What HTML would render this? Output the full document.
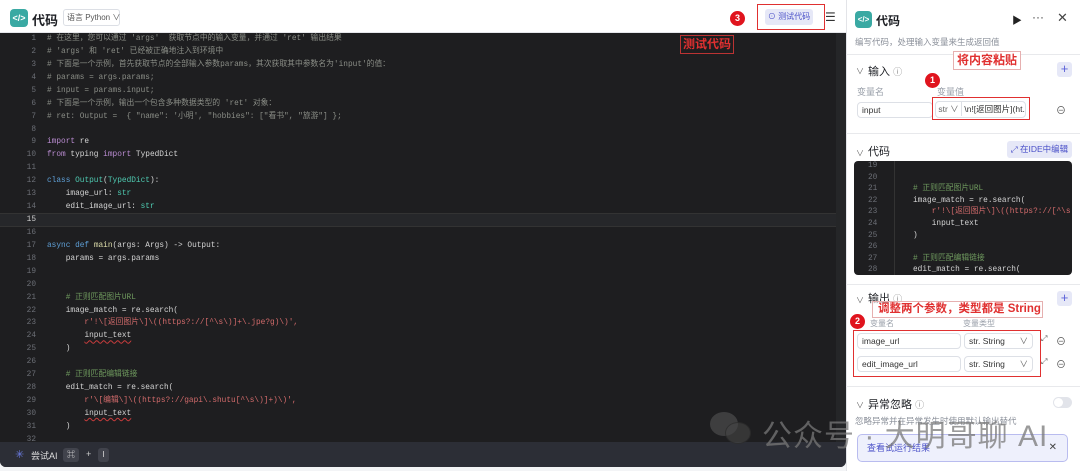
<!DOCTYPE html>
<html><head><meta charset="utf-8"><style>
*{margin:0;padding:0;box-sizing:border-box}
body{width:1080px;height:471px;overflow:hidden;background:#f3f4f6;font-family:"Liberation Sans","Noto Sans CJK SC",sans-serif;position:relative}
.a{position:absolute}
.code{font-family:"Liberation Mono","Noto Sans CJK SC",monospace;font-size:7.8px;white-space:pre;color:#d4d4d4}
.ln{position:absolute;left:0;width:36px;text-align:right;color:#6b6e75;font-size:7.8px;font-family:"Liberation Mono",monospace;height:12.93px;line-height:12.93px}
.cl{position:absolute;left:47px;height:12.93px;line-height:12.93px}
.cm{color:#8a8d86}.cg{color:#6f9a5e}.kw{color:#b98bd0}.bl{color:#5e9fd6}.ty{color:#4ec9b0}.st{color:#d36b6b}.fn{color:#dcdcaa}
.sq{text-decoration:underline wavy #c83c3c;text-underline-offset:2px}
.lbl{font-size:9px;color:#9aa0aa}
.box{border:1px solid #dde0e6;border-radius:4px;background:#fff;font-size:8.5px;color:#333;padding-left:4px;line-height:14px}
.red{border:1.5px solid #e03030}
.badge{width:15px;height:15px;border-radius:50%;background:#e0141e;color:#fff;font-size:9px;font-weight:bold;text-align:center;line-height:15px}
.sec{font-size:11px;color:#1d1f24}
.chev{font-size:8px;color:#666}
.plus{width:15px;height:15px;border-radius:3px;background:#e6e8f7;color:#5c62d8;font-size:13px;line-height:14px;text-align:center}
.div{height:1px;background:#e8e9ec;left:846px;width:234px}
</style></head><body>
<!-- left panel -->
<div class="a" style="left:0;top:0;width:846px;height:467px;background:#1e1e20;border-radius:0 0 6px 6px"></div>
<div class="a" style="left:0;top:0;width:846px;height:33px;background:#fff;border-bottom:1px solid #e5e6ea"></div>
<div class="a" style="left:10px;top:9px;width:18px;height:18px;border-radius:4px;background:#3aa9a3;color:#fff;font-size:9px;font-weight:bold;text-align:center;line-height:18px">&lt;/&gt;</div>
<div class="a" style="left:32px;top:10px;font-size:13px;font-weight:bold;color:#1d1f24">代码</div>
<div class="a" style="left:63px;top:9px;width:57px;height:17px;border:1px solid #dcdfe5;border-radius:3px;font-size:8px;color:#555;line-height:15px;padding-left:3px;white-space:nowrap">语言 Python ∨</div>
<div class="a badge" style="left:730px;top:11px">3</div>
<div class="a" style="left:757px;top:4px;width:68px;height:26px;border:1.5px solid #e03030"></div>
<div class="a" style="left:765px;top:9px;width:48px;height:16px;background:#e6e8f7;border-radius:3px;color:#4a50c8;font-size:8px;line-height:16px;text-align:center;white-space:nowrap">⊙ 测试代码</div>
<div class="a" style="left:825px;top:10px;font-size:12px;color:#333">☰</div>
<div class="a" style="left:680px;top:35px;width:54px;height:19px;border:1px solid #b33;color:#e03030;font-size:12px;font-weight:bold;line-height:17px;text-align:center;background:#1e1e20">测试代码</div>
<div class="a" style="left:0;top:213px;width:836px;height:14px;background:#26272a;border-top:1px solid #333;border-bottom:1px solid #333"></div>
<div class="a" style="left:836px;top:33px;width:10px;height:409px;background:#252628"></div>
<div class="a code" style="left:0;top:33px;width:836px;height:409px;overflow:hidden">
<div class="ln" style="top:0">1</div><div class="cl cm" style="top:0"># 在这里，您可以通过 'args'  获取节点中的输入变量，并通过 'ret' 输出结果</div>
<div class="ln" style="top:12.93px">2</div><div class="cl cm" style="top:12.93px"># 'args' 和 'ret' 已经被正确地注入到环境中</div>
<div class="ln" style="top:25.86px">3</div><div class="cl cm" style="top:25.86px"># 下面是一个示例，首先获取节点的全部输入参数params，其次获取其中参数名为'input'的值：</div>
<div class="ln" style="top:38.79px">4</div><div class="cl cm" style="top:38.79px"># params = args.params;</div>
<div class="ln" style="top:51.72px">5</div><div class="cl cm" style="top:51.72px"># input = params.input;</div>
<div class="ln" style="top:64.65px">6</div><div class="cl cm" style="top:64.65px"># 下面是一个示例，输出一个包含多种数据类型的 'ret' 对象：</div>
<div class="ln" style="top:77.58px">7</div><div class="cl cm" style="top:77.58px"># ret: Output =  { "name": '小明', "hobbies": ["看书", "旅游"] };</div>
<div class="ln" style="top:90.51px">8</div>
<div class="ln" style="top:103.44px">9</div><div class="cl" style="top:103.44px"><span class="kw">import</span> re</div>
<div class="ln" style="top:116.37px">10</div><div class="cl" style="top:116.37px"><span class="kw">from</span> typing <span class="kw">import</span> TypedDict</div>
<div class="ln" style="top:129.3px">11</div>
<div class="ln" style="top:142.23px">12</div><div class="cl" style="top:142.23px"><span class="bl">class</span> <span class="ty">Output</span>(<span class="ty">TypedDict</span>):</div>
<div class="ln" style="top:155.16px">13</div><div class="cl" style="top:155.16px">    image_url: <span class="ty">str</span></div>
<div class="ln" style="top:168.09px">14</div><div class="cl" style="top:168.09px">    edit_image_url: <span class="ty">str</span></div>
<div class="ln" style="top:181.02px;color:#ccc">15</div>
<div class="ln" style="top:193.95px">16</div>
<div class="ln" style="top:206.88px">17</div><div class="cl" style="top:206.88px"><span class="bl">async def</span> <span class="fn">main</span>(args: Args) -&gt; Output:</div>
<div class="ln" style="top:219.81px">18</div><div class="cl" style="top:219.81px">    params = args.params</div>
<div class="ln" style="top:232.74px">19</div>
<div class="ln" style="top:245.67px">20</div>
<div class="ln" style="top:258.6px">21</div><div class="cl cg" style="top:258.6px">    # 正则匹配图片URL</div>
<div class="ln" style="top:271.53px">22</div><div class="cl" style="top:271.53px">    image_match = re.search(</div>
<div class="ln" style="top:284.46px">23</div><div class="cl st" style="top:284.46px">        r'!\[返回图片\]\((https?://[^\s\)]+\.jpe?g)\)',</div>
<div class="ln" style="top:297.39px">24</div><div class="cl" style="top:297.39px">        <span class="sq">input_text</span></div>
<div class="ln" style="top:310.32px">25</div><div class="cl" style="top:310.32px">    )</div>
<div class="ln" style="top:323.25px">26</div>
<div class="ln" style="top:336.18px">27</div><div class="cl cg" style="top:336.18px">    # 正则匹配编辑链接</div>
<div class="ln" style="top:349.11px">28</div><div class="cl" style="top:349.11px">    edit_match = re.search(</div>
<div class="ln" style="top:362.04px">29</div><div class="cl st" style="top:362.04px">        r'\[编辑\]\((https?://gapi\.shutu[^\s\)]+)\)',</div>
<div class="ln" style="top:374.97px">30</div><div class="cl" style="top:374.97px">        <span class="sq">input_text</span></div>
<div class="ln" style="top:387.9px">31</div><div class="cl" style="top:387.9px">    )</div>
<div class="ln" style="top:400.83px">32</div>
</div>
<div class="a" style="left:0;top:442px;width:846px;height:25px;background:#2c2e36;border-radius:0 0 6px 6px"></div>
<div class="a" style="left:15px;top:448px;font-size:11px;color:#6a7be0">✳</div>
<div class="a" style="left:31px;top:449px;font-size:9px;color:#ddd">尝试AI</div>
<div class="a" style="left:63px;top:448px;width:16px;height:14px;background:#41434c;border-radius:3px;font-size:8px;color:#ddd;text-align:center;line-height:14px">⌘</div>
<div class="a" style="left:86px;top:449px;font-size:9px;color:#ccc">+</div>
<div class="a" style="left:98px;top:448px;width:11px;height:14px;background:#41434c;border-radius:3px;font-size:8px;color:#ddd;text-align:center;line-height:14px">I</div>

<!-- right panel -->
<div class="a" style="left:846px;top:0;width:234px;height:471px;background:#fff;border-left:1px solid #e3e4e8"></div>
<div class="a" style="left:855px;top:11px;width:17px;height:17px;border-radius:4px;background:#3aa9a3;color:#fff;font-size:8px;font-weight:bold;text-align:center;line-height:17px">&lt;/&gt;</div>
<div class="a" style="left:876px;top:12px;font-size:12px;font-weight:bold;color:#1d1f24">代码</div>
<div class="a" style="left:1012px;top:12px;font-size:10px;color:#222">▶</div>
<div class="a" style="left:1032px;top:10px;font-size:12px;color:#444">···</div>
<div class="a" style="left:1057px;top:10px;font-size:13px;color:#444">✕</div>
<div class="a" style="left:855px;top:36px;font-size:8.5px;color:#8a8f99">编写代码，处理输入变量来生成返回值</div>
<div class="a div" style="top:54px"></div>
<div class="a chev" style="left:856px;top:66px">∨</div>
<div class="a sec" style="left:868px;top:63px">输入 <span style="font-size:9px;color:#888">ⓘ</span></div>
<div class="a" style="left:953px;top:51px;width:68px;height:19px;border:1px solid #e6b0b0;color:#e03030;font-size:12px;font-weight:bold;text-align:center;line-height:17px;background:#fff">将内容粘贴</div>
<div class="a plus" style="left:1057px;top:62px">+</div>
<div class="a lbl" style="left:857px;top:85px">变量名</div>
<div class="a lbl" style="left:937px;top:85px">变量值</div>
<div class="a badge" style="left:925px;top:73px">1</div>
<div class="a box" style="left:857px;top:102px;width:76px;height:16px">input</div>
<div class="a red" style="left:932px;top:97px;width:98px;height:23px"></div>
<div class="a box" style="left:935px;top:101px;width:91px;height:17px;padding-left:0;white-space:nowrap;overflow:hidden"><span style="display:inline-block;width:26px;border-right:1px solid #dde0e6;text-align:center;color:#666">str ∨</span> \n![返回图片](ht... <span style="color:#333">⊙</span></div>
<div class="a" style="left:1056px;top:102px;font-size:10px;color:#555">⊖</div>
<div class="a div" style="top:133px"></div>
<div class="a chev" style="left:856px;top:148px">∨</div>
<div class="a sec" style="left:868px;top:143px">代码</div>
<div class="a" style="left:1007px;top:141px;width:65px;height:17px;background:#e6e8f7;border-radius:3px;color:#4a50c8;font-size:8.5px;line-height:17px;text-align:center">⤢ 在IDE中编辑</div>
<div class="a code" style="left:854px;top:161px;width:218px;height:114px;background:#1e1e20;border-radius:4px;overflow:hidden">
<div class="a" style="left:40px;top:0;width:1px;height:114px;background:#333"></div>
<div style="position:absolute;left:14px;top:0;line-height:11.6px;color:#6b6e75">19<br>20<br>21<br>22<br>23<br>24<br>25<br>26<br>27<br>28</div>
<div style="position:absolute;left:59px;top:0;line-height:11.6px"><br><br><span class="cg"># 正则匹配图片URL</span><br>image_match = re.search(<br><span class="st">    r'!\[返回图片\]\((https?://[^\s</span><br>    input_text<br>)<br><br><span class="cg"># 正则匹配编辑链接</span><br>edit_match = re.search(</div>
</div>
<div class="a div" style="top:284px"></div>
<div class="a chev" style="left:856px;top:295px">∨</div>
<div class="a sec" style="left:868px;top:290px">输出 <span style="font-size:9px;color:#888">ⓘ</span></div>
<div class="a plus" style="left:1057px;top:291px">+</div>
<div class="a" style="left:872px;top:301px;width:171px;height:17px;border:1px solid #e6b0b0;background:rgba(255,255,255,.6);color:#e03030;font-size:11.5px;font-weight:bold;line-height:15px;padding-left:5px;white-space:nowrap">调整两个参数，类型都是 String</div>
<div class="a lbl" style="left:870px;top:318px;font-size:8px">变量名</div>
<div class="a lbl" style="left:963px;top:318px;font-size:8px">变量类型</div>
<div class="a badge" style="left:850px;top:314px">2</div>
<div class="a red" style="left:853px;top:330px;width:188px;height:47px"></div>
<div class="a box" style="left:857px;top:333px;width:104px;height:16px">image_url</div>
<div class="a box" style="left:964px;top:333px;width:69px;height:16px">str. String<span style="float:right;margin-right:4px;color:#666">∨</span></div>
<div class="a box" style="left:857px;top:356px;width:104px;height:16px">edit_image_url</div>
<div class="a box" style="left:964px;top:356px;width:69px;height:16px">str. String<span style="float:right;margin-right:4px;color:#666">∨</span></div>
<div class="a" style="left:1041px;top:334px;font-size:8px;color:#555">⤢</div>
<div class="a" style="left:1041px;top:357px;font-size:8px;color:#555">⤢</div>
<div class="a" style="left:1056px;top:333px;font-size:10px;color:#555">⊖</div>
<div class="a" style="left:1056px;top:356px;font-size:10px;color:#555">⊖</div>
<div class="a div" style="top:386px"></div>
<div class="a chev" style="left:856px;top:400px">∨</div>
<div class="a sec" style="left:868px;top:396px">异常忽略 <span style="font-size:9px;color:#888">ⓘ</span></div>
<div class="a" style="left:1053px;top:397px;width:19px;height:11px;border-radius:6px;background:#e2e4ea"><div style="margin:1px;width:9px;height:9px;border-radius:50%;background:#fff"></div></div>
<div class="a" style="left:855px;top:415px;font-size:8.5px;color:#8a8f99">忽略异常并在异常发生时使用默认输出替代</div>
<div class="a" style="left:857px;top:434px;width:211px;height:28px;border:1px solid #b9bcef;border-radius:5px;background:#eef0fc;color:#4a50c8;font-size:9px;line-height:26px;padding-left:9px">查看试运行结果<span style="float:right;margin-right:10px;color:#444;font-size:10px">✕</span></div>

<!-- watermark -->
<div class="a" style="left:710px;top:412px;width:28px;height:24px;border-radius:50%;background:rgba(90,90,90,.55)"></div>
<div class="a" style="left:725px;top:422px;width:26px;height:22px;border-radius:50%;background:rgba(70,70,70,.6);border:1px solid rgba(30,30,30,.5)"></div>
<div class="a" style="left:762px;top:411px;font-size:30px;color:rgba(120,120,120,.75);white-space:nowrap;letter-spacing:1px">公众号 · 大明哥聊 AI</div>
</body></html>
